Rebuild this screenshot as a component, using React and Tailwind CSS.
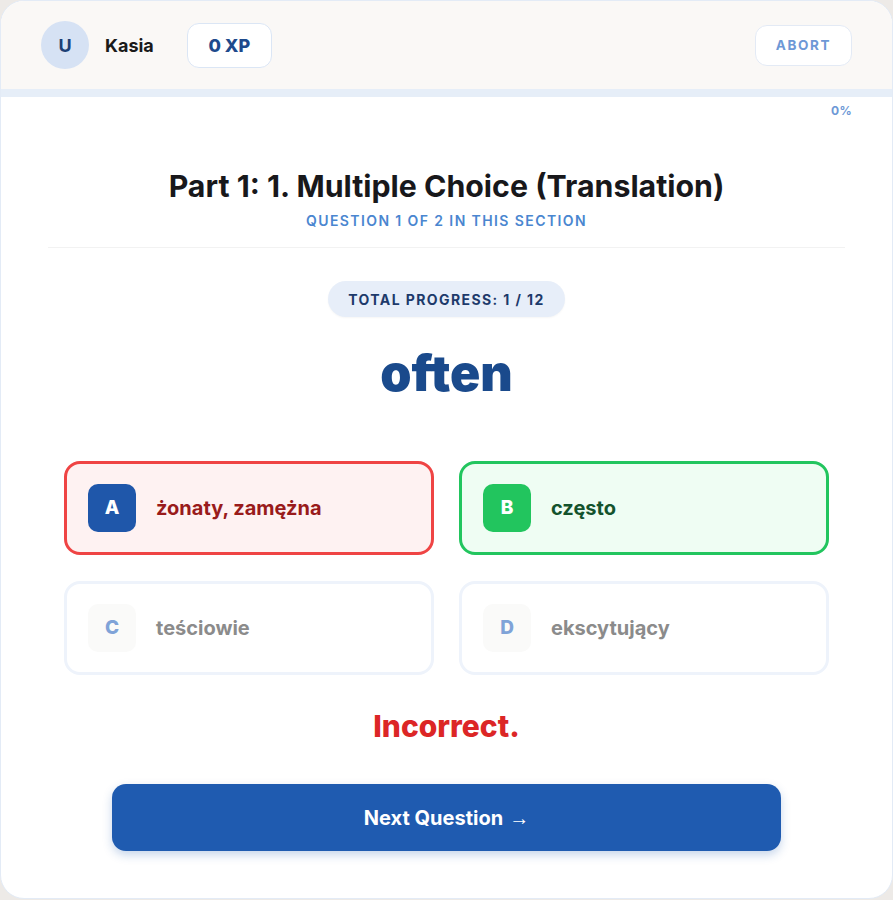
const options = [
  { key: "A", text: "żonaty, zamężna", state: "wrong" },
  { key: "B", text: "często", state: "right" },
  { key: "C", text: "teściowie", state: "idle" },
  { key: "D", text: "ekscytujący", state: "idle" },
];

const styles = {
  wrong: {
    card: "border-[#ef4444] bg-[#fef2f2]",
    badge: "bg-[#1f57aa] text-white",
    text: "text-[#991b1b]",
  },
  right: {
    card: "border-[#22c55e] bg-[#effdf3]",
    badge: "bg-[#22c55e] text-white",
    text: "text-[#14532d]",
  },
  idle: {
    card: "border-[#eef3fb] bg-white",
    badge: "bg-[#fafaf9] text-[#7fa3d8]",
    text: "text-[#8b8b8b]",
  },
};

function Option({ option }) {
  const s = styles[option.state];
  return (
    <div className={`flex h-[94px] items-center rounded-[16px] border-[3px] px-[21px] ${s.card}`}>
      <div className={`flex h-12 w-12 items-center justify-center rounded-[10px] text-[19px] font-extrabold ${s.badge}`}>
        {option.key}
      </div>
      <span className={`ml-5 text-[20px] font-bold ${s.text}`}>{option.text}</span>
    </div>
  );
}

export default function App() {
  return (
    <div className="min-h-screen bg-[#edeae7]" style={{ fontFamily: "Inter, 'Noto Sans', sans-serif" }}>
      <div className="flex h-[899px] w-[893px] flex-col overflow-hidden rounded-[24px] border border-[#e3ebf6] bg-white">
        <header className="flex h-[88px] shrink-0 items-center justify-between bg-[#faf8f6] px-[40px]">
          <div className="flex items-center">
            <div className="flex h-12 w-12 items-center justify-center rounded-full bg-[#d6e2f4] text-[18px] font-bold text-[#1d3f75]">
              U
            </div>
            <span className="ml-4 text-[18px] font-bold text-[#1a1a1a]">Kasia</span>
            <div className="ml-[33px] flex h-[45px] w-[85px] items-center justify-center rounded-xl border-[1.5px] border-[#dbe6f5] bg-white text-[18px] font-extrabold text-[#1e4a8c]">
              0 XP
            </div>
          </div>
          <button className="flex h-[41px] w-[97px] items-center justify-center rounded-xl border-[1.5px] border-[#e3eaf5] bg-white text-[13.5px] font-bold tracking-[0.12em] text-[#6d98d6]">
            ABORT
          </button>
        </header>
        <div className="h-2 shrink-0 bg-[#e6eef8]" />
        <div className="px-[40px] pt-[6px] text-right text-[12px] font-bold leading-4 tracking-wide text-[#6d98d6]">0%</div>

        <div className="flex flex-col items-center px-[47px]">
          <h1 className="mt-[49px] text-[30.3px] font-bold leading-9 text-[#18181b]">
            Part 1: 1. Multiple Choice (Translation)
          </h1>
          <p className="mt-[7px] text-[14px] font-semibold leading-5 tracking-[0.1em] text-[#4a86d0]">
            QUESTION 1 OF 2 IN THIS SECTION
          </p>
          <div className="mt-4 h-px w-full bg-[#f2f2f2]" />
          <div className="mt-[33px] flex h-9 w-[237px] items-center justify-center rounded-full bg-[#e7eef9] text-[14px] font-bold tracking-[0.1em] text-[#1d3a6b] shadow-[0_1px_2px_rgba(0,0,0,0.04)]">
            TOTAL PROGRESS: 1 / 12
          </div>
          <div className="mt-[28px] text-[50px] font-black leading-[56px] text-[#1a4a8c]">often</div>

          <div className="mt-[60px] grid w-full grid-cols-2 gap-x-[25px] gap-y-[26px] px-4">
            {options.map((o) => (
              <Option key={o.key} option={o} />
            ))}
          </div>

          <div className="mt-[33px] text-[30px] font-extrabold leading-9 text-[#dc2626]">Incorrect.</div>

          <button className="mt-[40px] flex h-[67px] w-[669px] items-center justify-center rounded-[14px] bg-[#1f5bb0] text-[20px] font-bold text-white shadow-[0_4px_10px_rgba(31,91,176,0.25)]">
            Next Question
            <span className="ml-[6px] font-normal" style={{ fontFamily: "'Liberation Sans', sans-serif" }}>→</span>
          </button>
        </div>
      </div>
    </div>
  );
}
